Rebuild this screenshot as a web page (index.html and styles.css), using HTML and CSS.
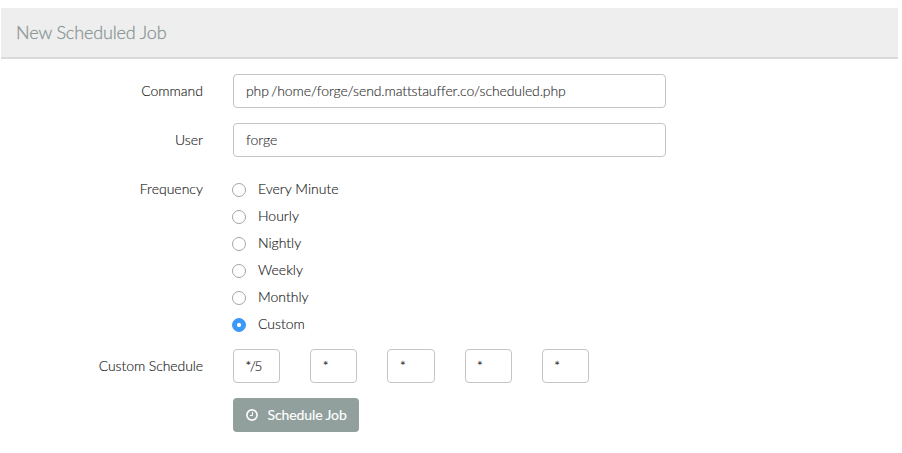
FILE: index.html
```html
<!DOCTYPE html>
<html lang="en">
<head>
<meta charset="utf-8">
<title>New Scheduled Job</title>
<link rel="stylesheet" href="styles.css">
</head>
<body>
<section class="panel">
  <header class="panel-heading">New Scheduled Job</header>
  <form class="form">
    <div class="label">Command</div>
    <div class="input path">php /home/forge/send.mattstauffer.co/scheduled.php</div>
    <div class="label">User</div>
    <div class="input">forge</div>
    <div class="label">Frequency</div>
    <div class="options">
      <label class="option"><i class="radio"></i><span>Every Minute</span></label>
      <label class="option"><i class="radio"></i><span>Hourly</span></label>
      <label class="option"><i class="radio"></i><span>Nightly</span></label>
      <label class="option"><i class="radio"></i><span>Weekly</span></label>
      <label class="option"><i class="radio"></i><span>Monthly</span></label>
      <label class="option"><i class="radio checked"></i><span>Custom</span></label>
    </div>
    <div class="label schedule-label">Custom Schedule</div>
    <div class="schedule">
      <div class="input">*/5</div>
      <div class="input">*</div>
      <div class="input">*</div>
      <div class="input">*</div>
      <div class="input">*</div>
    </div>
    <button class="button" type="button">
      <svg class="clock" viewBox="0 0 12 12" fill="none" stroke="currentColor"><circle cx="6" cy="6" r="5.1" stroke-width="1.6"/><path d="M6.5 3v3.5H4" stroke-width="1"/></svg>
      <span>Schedule Job</span>
    </button>
  </form>
</section>
</body>
</html>
```
FILE: styles.css
```css
* { box-sizing: border-box; }
body {
  margin: 0;
  background: #fff;
  color: #222;
  font: 300 14px/20px Lato, "Liberation Sans", sans-serif;
  -webkit-text-stroke: 0.15px currentColor;
}
.panel { margin: 8px 4px 0 1px; }
.panel-heading {
  height: 51px;
  padding: 13px 15px 0;
  background: #eee;
  border-bottom: 2px solid #d9d9d9;
  color: #8c9797;
  font-size: 18px;
  line-height: 22px;
  letter-spacing: -0.13px;
  -webkit-text-stroke: 0.3px currentColor;
}
.form {
  display: grid;
  grid-template-columns: 202px 433px;
  column-gap: 30px;
  row-gap: 15px;
  padding-top: 15px;
}
.label { padding-top: 7px; text-align: right; }
.schedule-label { letter-spacing: -0.08px; }
.input {
  height: 34px;
  padding: 6px 12px;
  border: 1px solid #c4c4c4;
  border-radius: 4px;
  background: #fff;
  color: #333;
  white-space: nowrap;
}
.path { letter-spacing: -0.11px; word-spacing: -1.2px; }
.options { height: 162px; padding-top: 7px; }
.option {
  display: flex;
  align-items: center;
  gap: 12px;
  height: 20px;
  margin-bottom: 7px;
}
.radio {
  width: 14px;
  height: 14px;
  margin: 1px 0 0 -1px;
  border: 1px solid #a5a5a5;
  border-radius: 50%;
}
.radio.checked {
  border-color: #3b93f7;
  background: radial-gradient(circle, #fff 1.7px, #3b99fc 2.4px);
}
.schedule { display: flex; gap: 30px; }
.schedule .input {
  width: 47.2px;
  padding-left: 11.5px;
  font-size: 13.5px;
  letter-spacing: -1.3px;
  -webkit-text-stroke: 0.2px currentColor;
}
.button {
  grid-column: 2;
  display: flex;
  align-items: center;
  width: 126px;
  height: 34px;
  padding: 0 13px;
  border: 0;
  border-radius: 4px;
  background: #919f9d;
  color: #fff;
  font: 400 14px/20px Lato, "Liberation Sans", sans-serif;
  letter-spacing: -0.1px;
  white-space: nowrap;
}
.clock { width: 12px; height: 12px; margin-right: 9.5px; flex: none; }
```
